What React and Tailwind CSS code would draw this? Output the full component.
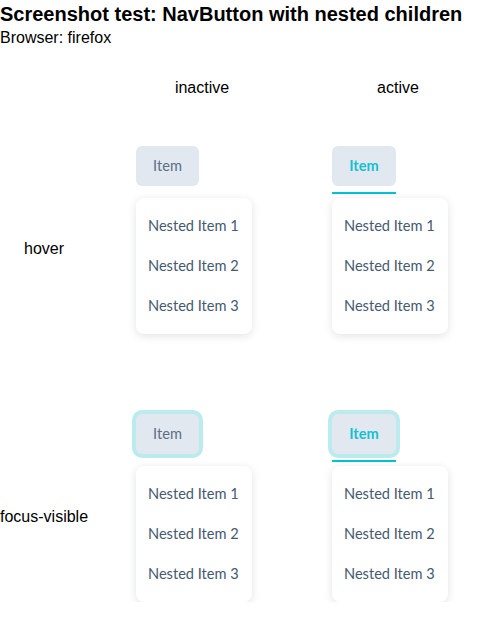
import React from "react";

function Dropdown() {
  return (
    <div className="w-[116px] rounded-lg bg-white py-2 shadow-[0_2px_8px_rgba(15,23,42,0.12)]">
      {["Nested Item 1", "Nested Item 2", "Nested Item 3"].map((t) => (
        <div key={t} className="flex h-10 items-center px-3 text-[14.6px] text-[#45596f] whitespace-nowrap">
          {t}
        </div>
      ))}
    </div>
  );
}

function Cell({ active, focus }) {
  return (
    <div className="flex flex-col items-start pt-[34px] font-['Lato',sans-serif]">
      <div className="flex flex-col items-stretch">
        <div
          className={
            "flex h-10 items-center justify-center rounded-md bg-[#e2e8f0] text-[14.6px] " +
            (active ? "w-[64px] font-bold text-[#14c1d0] " : "w-[63px] text-[#5a6f87] ") +
            (focus ? "ring-4 ring-[#bcebee]" : "")
          }
        >
          Item
        </div>
        <div className={"mt-[6px] h-[2px] " + (active ? "bg-[#00c2d1]" : "bg-transparent")} />
      </div>
      <div className="mt-1">
        <Dropdown />
      </div>
    </div>
  );
}

export default function App() {
  return (
    <div className="font-['Liberation_Sans',Arial,sans-serif] text-black">
      <h1 className="text-[20px] font-bold leading-[28px]">Screenshot test: NavButton with nested children</h1>
      <p className="text-[16px] leading-[20px]">Browser: firefox</p>
      <div className="mt-[16px] grid grid-cols-[104px_196px_1fr]">
        <div className="h-12" />
        <div className="flex h-12 items-center justify-center text-[16px]">inactive</div>
        <div className="flex h-12 items-center justify-center pl-[15px] text-[16px]">active</div>

        <div className="w-[88px] whitespace-nowrap pt-[125px] text-center text-[16px] leading-6">hover</div>
        <div className="pb-[46px] pl-8">
          <Cell />
        </div>
        <div className="pb-[46px] pl-8">
          <Cell active />
        </div>

        <div className="w-[88px] whitespace-nowrap pt-[125px] text-center text-[16px] leading-6">focus-visible</div>
        <div className="pl-8">
          <Cell focus />
        </div>
        <div className="pl-8">
          <Cell active focus />
        </div>
      </div>
    </div>
  );
}
